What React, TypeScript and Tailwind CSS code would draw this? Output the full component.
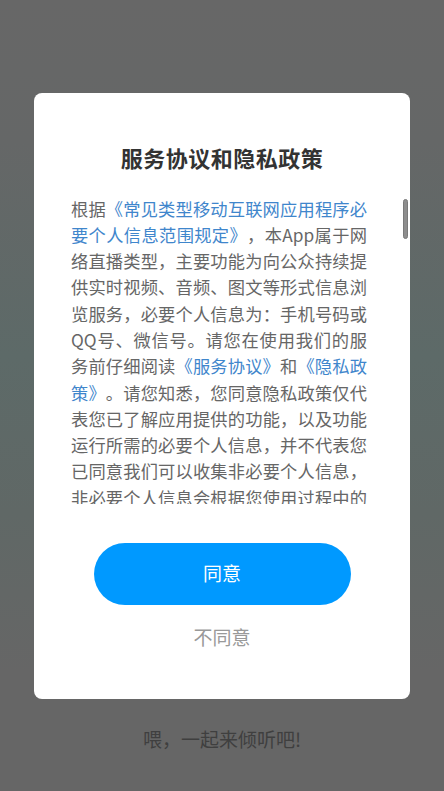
import React from "react";

const font = { fontFamily: '"Noto Sans CJK SC", "Noto Sans", sans-serif' };

export default function App() {
  return (
    <div
      className="relative w-full h-[791px] overflow-hidden bg-[linear-gradient(180deg,#676767_0%,#656767_18%,#5d6a68_45%,#606866_65%,#666666_85%,#666666_100%)]"
      style={font}
    >
      {/* underlying page */}
      <div className="flex h-full flex-col items-center justify-end pb-[38px]">
        <p className="text-[19px] leading-[28px] text-[#3f3f3f]">喂，一起来倾听吧!</p>
      </div>

      {/* modal */}
      <div className="absolute inset-0 flex items-center justify-center">
        <div className="relative w-[376px] rounded-[8px] bg-white pt-[50px] pb-[48px] flex flex-col items-center">
          <h1 className="text-[22px] leading-[28px] font-bold text-[#333333] tracking-[0.5px]">
            服务协议和隐私政策
          </h1>
          <div className="mt-[25px] h-[308px] w-full overflow-hidden pl-[37px]">
            <p className="w-[296px] text-[17.25px] leading-[26.3px] text-[#666666] [text-spacing-trim:space-all] text-justify">
              根据<span className="text-[#3f86cc]">《常见类型移动互联网应用程序必要个人信息范围规定》</span>，本App属于网络直播类型，主要功能为向公众持续提供实时视频、音频、图文等形式信息浏览服务，必要个人信息为：手机号码或QQ号、微信号。请您在使用我们的服务前仔细阅读<span className="text-[#3f86cc]">《服务协议》</span>和<span className="text-[#3f86cc]">《隐私政策》</span>。请您知悉，您同意隐私政策仅代表您已了解应用提供的功能，以及功能运行所需的必要个人信息，并不代表您已同意我们可以收集非必要个人信息，非必要个人信息会根据您使用过程中的授权情况单独征求您的同意，相应设备权限并不会默认开启，当涉及重要或敏感的设备权限时，我们会在您使用到相应业务功能时，另行弹窗再次征得您的同意后开启。
            </p>
          </div>
          {/* scrollbar thumb */}
          <div className="absolute left-[369px] top-[106px] h-[40px] w-[5px] rounded-full bg-[#8e8e8e] border border-[#7a7a7a]" />
          <button className="mt-[39px] flex h-[62px] w-[257px] items-center justify-center rounded-full bg-[#0099ff] text-[19px] text-white">
            同意
          </button>
          <button className="mt-[18px] h-[28px] text-[19px] leading-[28px] text-[#999999]">
            不同意
          </button>
        </div>
      </div>
    </div>
  );
}
